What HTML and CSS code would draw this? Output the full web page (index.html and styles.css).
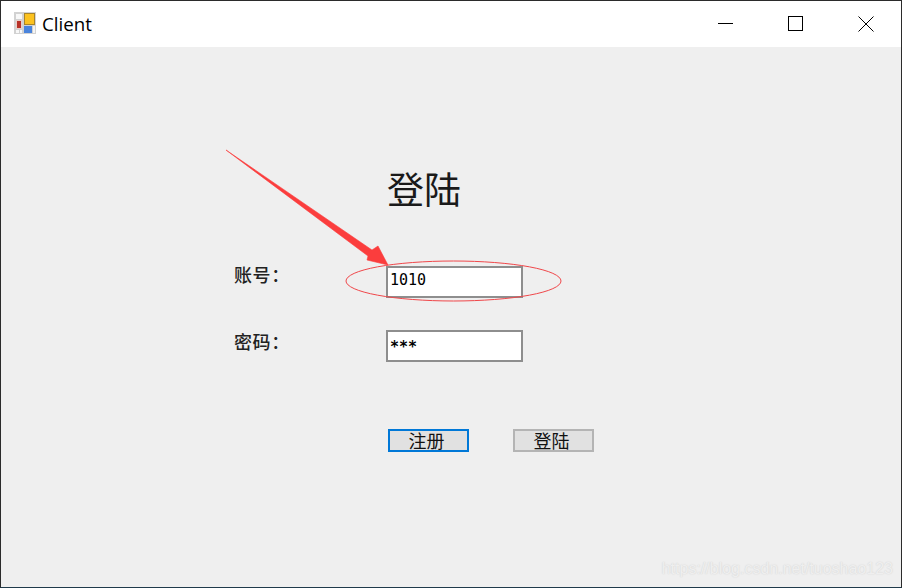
FILE: index.html
```html
<!DOCTYPE html>
<html lang="zh">
<head>
<meta charset="utf-8">
<title>Client</title>
<link rel="stylesheet" href="styles.css">
</head>
<body>
<div class="window">
  <header class="titlebar">
    <svg class="app-icon" width="22" height="22" viewBox="0 0 22 22">
      <rect x="0" y="0" width="22" height="22" fill="#d2d2d2"/>
      <rect x="2" y="2" width="6" height="5" fill="#f8f8f8"/>
      <rect x="2" y="8" width="6" height="9" fill="#e9cfc9"/>
      <rect x="3" y="9" width="4" height="7" fill="#b83228"/>
      <rect x="2" y="18" width="3" height="3" fill="#f8f8f8"/>
      <rect x="6" y="18" width="2" height="3" fill="#f8f8f8"/>
      <rect x="10" y="1" width="11" height="12" fill="#a8842a"/>
      <rect x="11" y="2" width="9" height="10" fill="#fcc21f"/>
      <rect x="10" y="14" width="8" height="7" fill="#4a84dc"/>
      <rect x="19" y="14" width="2" height="7" fill="#f4f4f4"/>
    </svg>
    <span class="app-name">Client</span>
    <div class="controls">
      <svg class="control" width="46" height="16" viewBox="0 0 46 16"><path d="M15 7.5h15" stroke="#000" fill="none"/></svg>
      <svg class="control" width="46" height="16" viewBox="0 0 46 16"><rect x="15.5" y="0.5" width="14" height="14" stroke="#000" fill="none"/></svg>
      <svg class="control" width="46" height="16" viewBox="0 0 46 16"><path d="M15.5 0.5l15 15M30.5 0.5l-15 15" stroke="#000" fill="none"/></svg>
    </div>
  </header>
  <main class="client">
    <div class="heading-row"><h1 class="heading">登陆</h1></div>
    <div class="field first">
      <label class="label">账号：</label>
      <div class="input">1010</div>
    </div>
    <div class="field second">
      <label class="label">密码：</label>
      <div class="input masked">***</div>
    </div>
    <div class="buttons">
      <button class="btn focused">注册</button>
      <button class="btn">登陆</button>
    </div>
    <svg class="annotation" width="902" height="588" viewBox="0 0 902 588">
      <ellipse cx="453.5" cy="281" rx="107.5" ry="20" fill="none" stroke="#f0474a" stroke-width="1"/>
      <path d="M226 150L372 250L378 246L388 265L367 260L368 256Z" fill="#fb3d3d" stroke="#fb3d3d" stroke-width="0.6" stroke-linejoin="round"/>
    </svg>
    <div class="watermark">https://blog.csdn.net/tuoshao123</div>
  </main>
</div>
</body>
</html>
```
FILE: styles.css
```css
* { box-sizing: border-box; }
html, body { margin: 0; padding: 0; }
body { width: 902px; height: 588px; overflow: hidden; font-family: "Noto Sans CJK SC", "Liberation Sans", sans-serif; }
.window {
  width: 902px; height: 588px; border: 1px solid #2b2b2b; border-bottom-color: #1f3a4a;
  display: flex; flex-direction: column; background: #efefef; position: relative;
}
.titlebar {
  height: 46px; background: #fff; display: flex; align-items: center; padding: 0 0 2px 13px; flex: none;
}
.app-icon { margin-right: 6px; flex: none; }
.app-name { font-family: "Open Sans", "Liberation Sans", sans-serif; font-size: 18.7px; color: #000; }
.controls { margin-left: auto; margin-top: 2px; display: flex; gap: 24px; padding-right: 12px; }
.control { display: block; }
.client { flex: 1; padding: 116px 0 0 232px; }
.heading-row { padding-left: 154px; height: 50px; }
.heading { margin: 0; font-size: 37px; font-weight: 400; line-height: 50px; color: #1a1a1a; }
.field { display: flex; align-items: flex-start; }
.field.first { margin-top: 53px; }
.field.second { margin-top: 32px; }
.field.first .label { margin-top: -2px; }
.field.second .label { margin-top: 1px; }
.label { width: 153px; padding-left: 1px; font-size: 18px; font-weight: 500; line-height: 20px; letter-spacing: 0.6px; color: #222; }
.input {
  width: 137px; height: 32px; background: #fff; border: 2px solid #8e8e8e;
  font-family: "DejaVu Sans Mono", monospace; font-size: 15px; line-height: 24px; padding-left: 2px; color: #000;
}
.input.masked { font-size: 15px; font-weight: 700; line-height: 30px; }
.buttons { display: flex; gap: 44px; margin-top: 67px; padding-left: 155px; }
.btn {
  width: 81px; height: 23px; padding: 0 4px 0 0; background: #e1e1e1; border: 2px solid #b4b4b4;
  font-family: "Noto Sans CJK SC", sans-serif; font-size: 18px; line-height: 19px; color: #111;
}
.btn.focused { border-color: #0078d7; }
.annotation { position: absolute; left: -1px; top: -1px; pointer-events: none; }
.watermark {
  position: absolute; right: 8px; bottom: 9px;
  font-family: "Liberation Sans", sans-serif; font-size: 16px; color: #efefef;
  text-shadow: 0 0 1px #d4d4d4, 0 0 2px #e0e0e0;
}
```
